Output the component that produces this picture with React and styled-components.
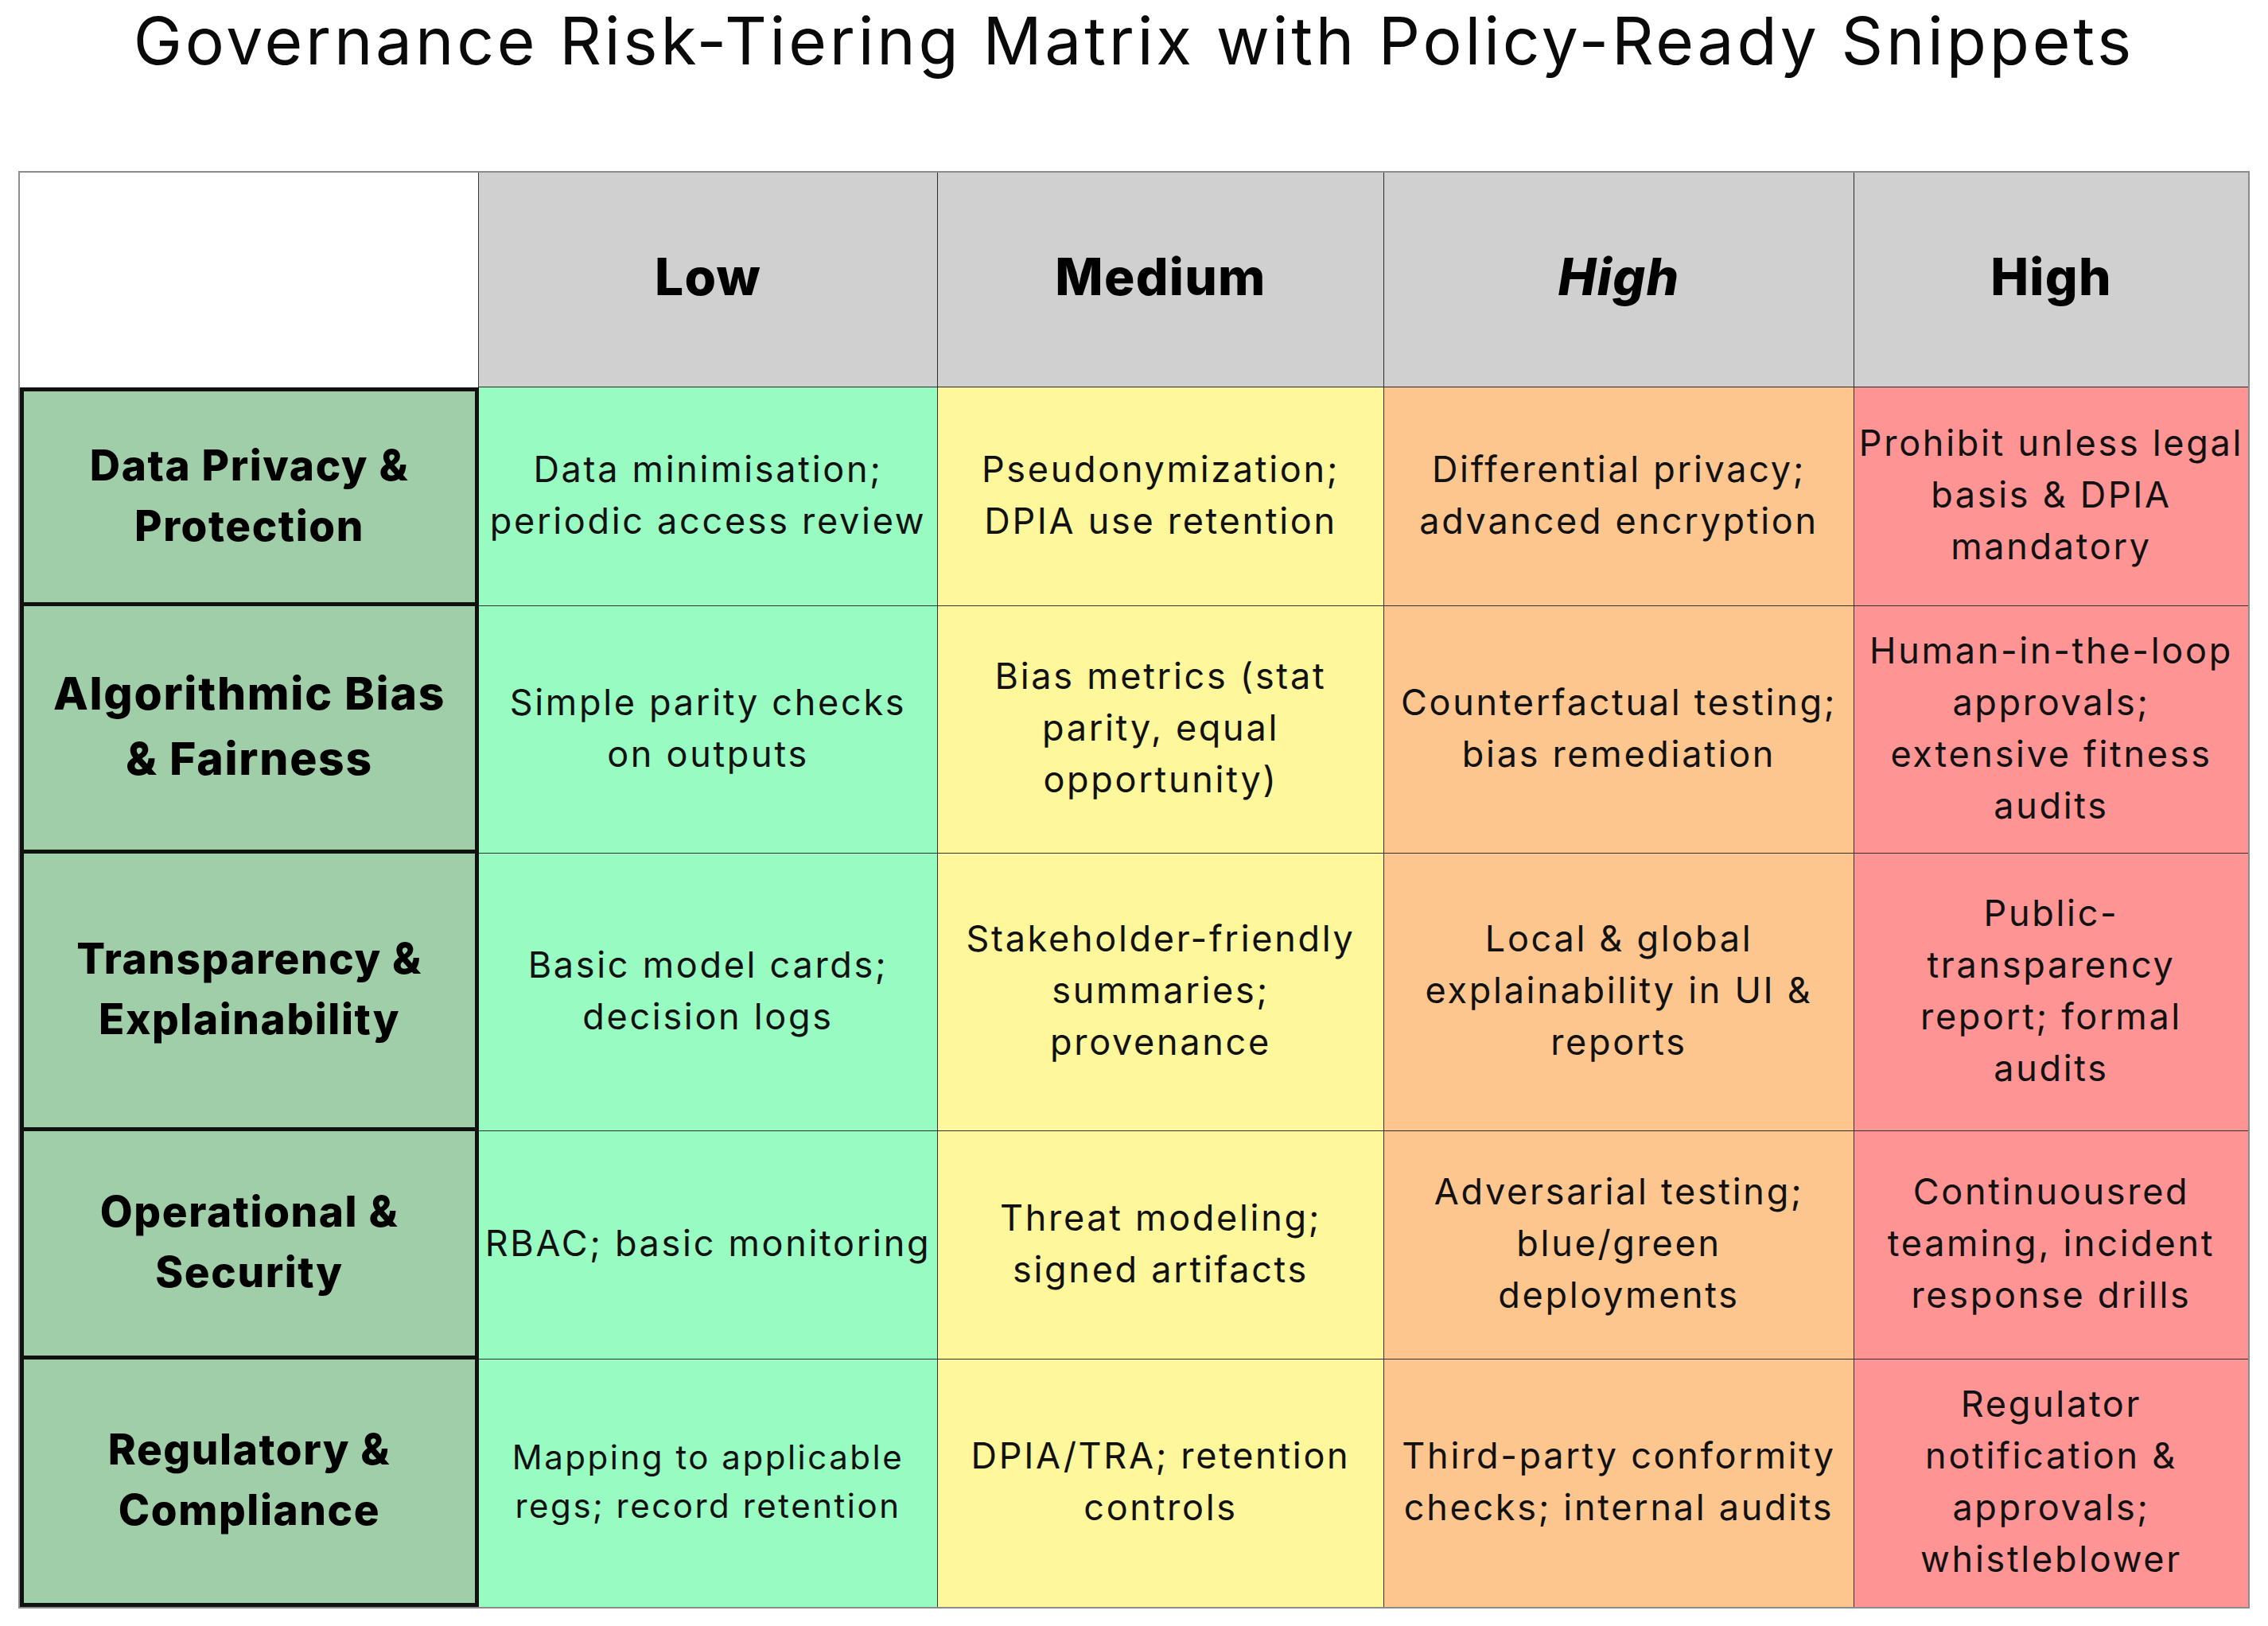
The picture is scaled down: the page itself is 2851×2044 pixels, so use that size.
import React from "react";
import styled, { createGlobalStyle, css } from "styled-components";

const GlobalStyle = createGlobalStyle`
  html, body { margin: 0; padding: 0; background: #ffffff; }
  body { font-family: Inter, "Open Sans", "DejaVu Sans", sans-serif; color: #111; }
`;

const Page = styled.div`
  width: 2851px;
  min-height: 2044px;
  padding: 0 23px;
  box-sizing: border-box;
  background: #fff;
`;

const Title = styled.h1`
  margin: 0 0 113px 0;
  padding-top: 2px;
  font-family: Inter, "Open Sans", sans-serif;
  font-weight: 400;
  font-size: 82px;
  line-height: 100px;
  letter-spacing: 0.046em;
  text-align: center;
  color: #0a0a0a;
  white-space: nowrap;
`;

const Matrix = styled.div`
  display: grid;
  grid-template-columns: 577px 577px 561px 591px 495px;
  grid-template-rows: 270px 275px 311px 349px 287px 311px;
  border: 2px solid #8c8c8c;
  width: max-content;
`;

const cellBase = css`
  box-sizing: border-box;
  display: flex;
  flex-direction: column;
  align-items: center;
  justify-content: center;
  text-align: center;
`;

const Corner = styled.div`
  ${cellBase};
  background: #ffffff;
  border-right: 1px solid #3a3a3a;
`;

const HeadCell = styled.div`
  ${cellBase};
  padding-bottom: 8px;
  background: #d0d0d0;
  border-bottom: 1px solid #2c2c2c;
  border-right: ${(p) => (p.$last ? "none" : "1px solid #2c2c2c")};
  font-family: Inter, "Open Sans", sans-serif;
  font-weight: 800;
  font-size: 64px;
  letter-spacing: 0.02em;
  font-style: ${(p) => (p.$italic ? "italic" : "normal")};
  color: #000;
`;

const RowHead = styled.div`
  ${cellBase};
  padding-bottom: 4px;
  background: #a0cea8;
  border: 5px solid #111;
  border-top-width: ${(p) => (p.$first ? "5px" : "0")};
  font-family: Inter, "Open Sans", sans-serif;
  font-weight: 800;
  font-size: ${(p) => p.$size}px;
  line-height: ${(p) => Math.round(p.$size * 1.43)}px;
  letter-spacing: 0.03em;
  color: #000;
`;

const tierColors = {
  low: "#98fbc2",
  medium: "#fff79b",
  elevated: "#fec68f",
  high: "#ff9494",
};

const Cell = styled.div`
  ${cellBase};
  padding-bottom: 5px;
  background: ${(p) => tierColors[p.$tier]};
  border-right: ${(p) => (p.$last ? "none" : "1px solid #333")};
  border-bottom: ${(p) => (p.$bottom ? "none" : "1px solid #333")};
  font-family: Inter, "Open Sans", sans-serif;
  font-weight: 400;
  font-size: ${(p) => p.$size}px;
  line-height: ${(p) => Math.round(p.$size * 1.45)}px;
  letter-spacing: 0.06em;
  color: #111;
`;

const Line = styled.span`
  display: block;
  white-space: nowrap;
`;

const tiers = ["low", "medium", "elevated", "high"];

const headers = [
  { label: "Low" },
  { label: "Medium" },
  { label: "High", italic: true },
  { label: "High" },
];

const rows = [
  {
    name: ["Data Privacy &", "Protection"],
    size: 53,
    cells: [
      ["Data minimisation;", "periodic access review"],
      ["Pseudonymization;", "DPIA use retention"],
      ["Differential privacy;", "advanced encryption"],
      ["Prohibit unless legal", "basis & DPIA", "mandatory"],
    ],
  },
  {
    name: ["Algorithmic Bias", "& Fairness"],
    size: 57,
    cells: [
      ["Simple parity checks", "on outputs"],
      ["Bias metrics (stat", "parity, equal", "opportunity)"],
      ["Counterfactual testing;", "bias remediation"],
      ["Human-in-the-loop", "approvals;", "extensive fitness", "audits"],
    ],
  },
  {
    name: ["Transparency &", "Explainability"],
    size: 53,
    cells: [
      ["Basic model cards;", "decision logs"],
      ["Stakeholder-friendly", "summaries;", "provenance"],
      ["Local & global", "explainability in UI &", "reports"],
      ["Public-", "transparency", "report; formal", "audits"],
    ],
  },
  {
    name: ["Operational &", "Security"],
    size: 53,
    cells: [
      ["RBAC; basic monitoring"],
      ["Threat modeling;", "signed artifacts"],
      ["Adversarial testing;", "blue/green", "deployments"],
      ["Continuousred", "teaming, incident", "response drills"],
    ],
  },
  {
    name: ["Regulatory &", "Compliance"],
    size: 53,
    cells: [
      ["Mapping to applicable", "regs; record retention"],
      ["DPIA/TRA; retention", "controls"],
      ["Third-party conformity", "checks; internal audits"],
      ["Regulator", "notification &", "approvals;", "whistleblower"],
    ],
    sizes: [42, 45, 45, 45],
  },
];

export default function App() {
  return (
    <>
      <GlobalStyle />
      <Page>
        <Title>Governance Risk-Tiering Matrix with Policy-Ready Snippets</Title>
        <Matrix>
          <Corner />
          {headers.map((h, i) => (
            <HeadCell key={i} $italic={h.italic} $last={i === headers.length - 1}>
              {h.label}
            </HeadCell>
          ))}
          {rows.map((row, r) => (
            <React.Fragment key={r}>
              <RowHead $first={r === 0} $size={row.size}>
                {row.name.map((t, k) => (
                  <Line key={k}>{t}</Line>
                ))}
              </RowHead>
              {row.cells.map((lines, c) => (
                <Cell
                  key={c}
                  $tier={tiers[c]}
                  $last={c === 3}
                  $bottom={r === rows.length - 1}
                  $size={row.sizes ? row.sizes[c] : 45}
                >
                  {lines.map((t, k) => (
                    <Line key={k}>{t}</Line>
                  ))}
                </Cell>
              ))}
            </React.Fragment>
          ))}
        </Matrix>
      </Page>
    </>
  );
}
